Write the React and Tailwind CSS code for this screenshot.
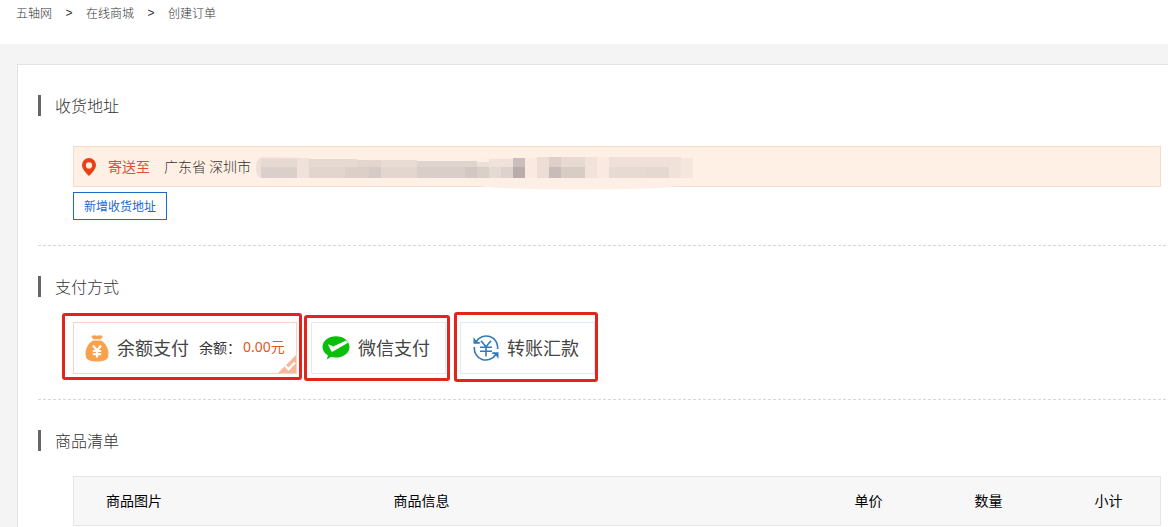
import React from 'react';

const crumbs = ['五轴网', '在线商城', '创建订单'];

// x, y, width, height, fill
const redactionCells = [
  [11, 13, 36, 8, '#e5d9d2'], [11, 21, 36, 11, '#dacfc9'],
  [47, 12, 12, 20, '#f0e2da'],
  [59, 13, 48, 8, '#e6d9d1'], [59, 21, 36, 11, '#e2d5cd'], [95, 21, 24, 11, '#dbcfc7'],
  [107, 14, 24, 7, '#e2d6ce'], [119, 21, 12, 11, '#d5cac4'],
  [131, 14, 36, 7, '#e8dcd4'], [131, 21, 36, 11, '#e3d6ce'],
  [167, 15, 60, 6, '#e0d4ce'], [167, 21, 48, 11, '#dacec8'], [215, 21, 12, 11, '#d3c7c1'],
  [227, 16, 12, 5, '#ecdfd7'], [227, 21, 12, 11, '#dad0ca'], [239, 21, 12, 11, '#e5dad2'],
  [239, 13, 24, 8, '#eee2da'], [251, 21, 12, 11, '#ded3cc'],
  [263, 12, 12, 9, '#c9bebb'], [263, 21, 12, 11, '#b9acaa'],
  [275, 12, 12, 20, '#fae9e0'],
  [287, 11, 12, 21, '#ecddd5'], [299, 11, 12, 10, '#decfca'], [299, 21, 12, 11, '#c9bcb8'],
  [311, 11, 24, 10, '#e7dad2'], [311, 21, 24, 11, '#d8cdc5'],
  [335, 11, 12, 21, '#f1e2da'], [347, 11, 12, 21, '#fae9e1'],
  [359, 11, 60, 10, '#efe1d9'], [359, 21, 36, 11, '#e7dad2'], [395, 21, 24, 11, '#e5d8d0'],
  [419, 11, 12, 21, '#f0e2da'], [431, 12, 12, 20, '#f5e6de'],
];

function Redaction() {
  return (
    <svg aria-hidden="true" className="pointer-events-none absolute left-[176px] -top-px" width="450" height="46" viewBox="0 0 450 46">
      <path d="M222 14 Q228 10 240 11 L430 11 V39 Q422 41 408 42 Q320 45 252 42 Q235 42 222 38Z" fill="#feefe6" />
      <path d="M12 11 Q6 12 6 23 Q6 32 13 32 H60 V12Z" fill="#eee0d8" />
      {redactionCells.map(([x, y, w, h, fill], i) => (
        <rect key={i} x={x} y={y} width={w} height={h} fill={fill} shapeRendering="crispEdges" />
      ))}
    </svg>
  );
}

function SectionTitle({ children }) {
  return (
    <h2 className="flex h-[21px] items-center border-l-[3px] border-[#666] pb-0.5 pl-[14px] text-base leading-none font-light text-[#333]">
      {children}
    </h2>
  );
}

function PinIcon() {
  return (
    <svg aria-hidden="true" width="14" height="18" viewBox="0 0 14 18">
      <path fillRule="evenodd" fill="#e84118" d="M7 0a7 7 0 0 0-7 7c0 3.900 3.600 7.600 7 11 3.400-3.400 7-7.100 7-11a7 7 0 0 0-7-7Zm0 4.300a3.100 3.100 0 1 1 0 6.200 3.100 3.100 0 0 1 0-6.200Z" />
    </svg>
  );
}

function MoneyBagIcon() {
  return (
    <svg aria-hidden="true" width="24" height="27" viewBox="0 0 24 27">
      <path fill="#f9a14c" d="M7 .8Q9.500-.2 12 .7q2.500-.9 5 .1 1 .9 0 1.900l-1.300 1.500H8.300L7 2.700Q6 1.700 7 .8Z" />
      <path fill="#f9a14c" d="M8.200 5.500h7.600C20.500 8 23.500 13.300 23.500 18.500c0 6-3 8-11.500 8S.5 24.500.5 18.500C.5 13.300 3.500 8 8.200 5.500Z" />
      <path fill="none" stroke="#fff" strokeWidth="2.200" d="m8 10.500 4 5 4-5M12 15v7.500M7.800 16h8.400M7.800 19.200h8.400" />
    </svg>
  );
}

function WechatPayIcon() {
  return (
    <svg aria-hidden="true" width="28" height="24" viewBox="0 0 28 24">
      <path fill="#0abf0a" d="M14 .3c7.500 0 13.500 4.700 13.500 10.600S21.500 21.500 14 21.500c-1.700 0-3.400-.2-4.900-.7L5 23.600l.8-4.400C2.600 17.300.5 14.300.5 10.900.500 5 6.500.3 14 .3Z" />
      <path fill="#fff" d="M6.100 8.700c.8-.6 1.400-.2 2.100.3l3 1.500L24 4.600l2 2.200L11.300 15.300c-1 .7-1.900.3-2.300-.6L6.100 8.700Z" />
    </svg>
  );
}

function TransferIcon() {
  return (
    <svg aria-hidden="true" width="26" height="26" viewBox="0 0 26 26" fill="none" stroke="#3279b7" strokeWidth="1.600">
      <path d="M3.200 6.500A11.600 11.600 0 0 1 24.600 14M22.800 19.500A11.600 11.600 0 0 1 1.400 12" />
      <path d="m8 5.800 5 6 5-6M13 11.500v10M7 12.200h12M7 16.200h12" />
      <path fill="#3279b7" stroke="none" d="M.5 2 2.300 4.400 4 6.400 7.500 7.400 6.500 8.800H.5ZM25.500 24l-1.800-2.400-1.700-2-3.500-1 1-1.400h6Z" />
    </svg>
  );
}

function PayOption({ id, label, icon, extra, selected, boxClass, frameClass }) {
  return (
    <label htmlFor={id} className={`relative flex h-[52px] cursor-pointer items-center border ${boxClass}`}>
      <input id={id} type="radio" name="payment" defaultChecked={selected} className="sr-only" />
      {icon}
      <span className="ml-2 pb-[3px] text-lg leading-6 whitespace-nowrap text-[#444]">{label}</span>
      {extra}
      {selected && (
        <svg aria-hidden="true" className="absolute right-0 bottom-0" width="18" height="18" viewBox="0 0 18 18">
          <path fill="#f7b79c" d="M18 0v18H0Z" />
          <path fill="none" stroke="#fff" strokeWidth="2.400" d="m7.500 11 3 3.200L17 7.500" />
        </svg>
      )}
      <span aria-hidden="true" className={`pointer-events-none absolute rounded-[3px] border-3 border-[#e1251b] ${frameClass}`} />
    </label>
  );
}

export default function App() {
  return (
    <div className="overflow-hidden bg-[#f4f4f4] font-['Noto_Sans_CJK_SC',sans-serif]">
      <nav className="h-11 bg-white px-4 pt-[3px]">
        <ol className="flex text-xs leading-5 font-light text-[#333]">
          {crumbs.map((name, i) => (
            <li key={name} className="flex">
              {i > 0 && <span className="w-[34px] text-center font-['Liberation_Sans',sans-serif]">&gt;</span>}
              <a href="#">{name}</a>
            </li>
          ))}
        </ol>
      </nav>

      <main className="mt-5 ml-[17px] border-t border-l border-[#e3e3e3] bg-white pl-5">
        <section className="mr-0.5 border-b border-dashed border-[#d8d8d8] pt-[30px] pb-[25px]">
          <SectionTitle>收货地址</SectionTitle>
          <div className="mt-[30px] mr-[5px] ml-[35px]">
            <div className="relative flex h-[41px] items-center border border-[#f5dccd] bg-[#fff0e6] pl-2 text-sm">
              <PinIcon />
              <span className="ml-3 pb-0.5 text-[#e0502f]">寄送至</span>
              <span className="ml-[14px] pb-0.5 font-light text-[#333]">广东省 深圳市</span>
              <Redaction />
            </div>
            <button type="button" className="mt-[5px] h-7 border border-[#1e6bc8] px-[10px] text-xs text-[#2468d0]">
              新增收货地址
            </button>
          </div>
        </section>

        <section className="mr-0.5 border-b border-dashed border-[#d8d8d8] pt-[30px] pb-[25px]">
          <SectionTitle>支付方式</SectionTitle>
          <div className="mt-[25px] ml-[35px] flex gap-[14px]">
            <PayOption
              id="pay-balance"
              label="余额支付"
              icon={<MoneyBagIcon />}
              selected
              boxClass="w-[224px] border-[#f8d3c0] pl-[11px]"
              frameClass="-top-[10px] -right-[6px] -bottom-[7px] -left-3"
              extra={
                <span className="ml-[10px] flex pb-[3px] text-sm whitespace-nowrap text-[#333]">
                  余额：<span className="ml-0.5 font-['Noto_Sans','Noto_Sans_CJK_SC',sans-serif] text-[#e4591c]">0.00元</span>
                </span>
              }
            />
            <PayOption
              id="pay-wechat"
              label="微信支付"
              icon={<WechatPayIcon />}
              boxClass="w-[135px] border-[#e3e8ef] pl-[10px]"
              frameClass="-top-2 -right-[5px] -bottom-2 -left-2"
            />
            <PayOption
              id="pay-transfer"
              label="转账汇款"
              icon={<TransferIcon />}
              boxClass="w-[135px] border-[#dfeaf5] pl-3"
              frameClass="-top-[11px] -right-1 -bottom-[9px] -left-[7px]"
            />
          </div>
        </section>

        <section className="mr-0.5 pt-[30px] pb-0.5">
          <SectionTitle>商品清单</SectionTitle>
          <div className="mt-[25px] mr-[5px] ml-[35px]">
            <table className="w-full table-fixed border-collapse border border-[#e6e6e6] bg-[#f7f7f7] text-left text-sm text-black">
              <thead>
                <tr className="h-[49px]">
                  <th className="w-[288px] pb-0.5 pl-8 font-normal">商品图片</th>
                  <th className="pb-0.5 pl-8 font-normal">商品信息</th>
                  <th className="w-[120px] pb-0.5 pl-8 font-normal">单价</th>
                  <th className="w-[120px] pb-0.5 pl-8 font-normal">数量</th>
                  <th className="w-[98px] pb-0.5 pl-8 font-normal">小计</th>
                </tr>
              </thead>
            </table>
          </div>
        </section>
      </main>
    </div>
  );
}
